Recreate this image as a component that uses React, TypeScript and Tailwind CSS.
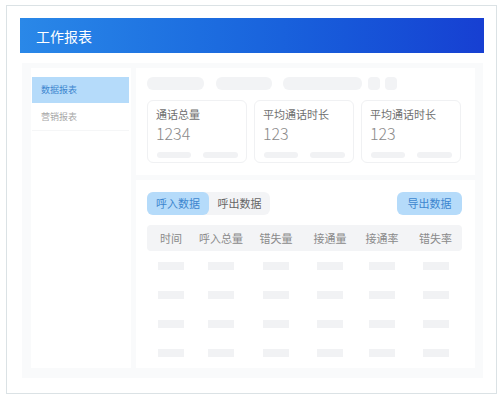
import React from "react";

const cols = ["时间", "呼入总量", "错失量", "接通量", "接通率", "错失率"];
const colClasses = ["w-[48px]", "w-[52px]", "w-[58px]", "w-[50px]", "w-[54px]", "w-[53px]"];

function StatCard({ title, value }: { title: string; value: string }) {
  return (
    <div className="w-[100px] h-[63px] rounded-md border border-[#f0f1f3] bg-white pl-[8px] pt-[5px] flex flex-col">
      <div className="text-[11px] leading-[16px] text-[#707070]">{title}</div>
      <div className="text-[16px] leading-[20px] font-light text-[#8a8a8a] mt-[1px]">{value}</div>
      <div className="flex gap-[12px] mt-[9px] pl-[1px]">
        <div className="w-[34px] h-[6px] rounded-full bg-[#f1f2f4]" />
        <div className="w-[35px] h-[6px] rounded-full bg-[#f1f2f4]" />
      </div>
    </div>
  );
}

export default function App() {
  return (
    <div
      className="w-[500px] h-[407px] bg-white pt-[5px] pl-[6px]"
      style={{ fontFamily: '"Noto Sans CJK SC", "Noto Sans", sans-serif' }}
    >
      <div className="w-[491px] h-[389px] border border-[#dbe2e5] bg-white pt-[12px] pl-[13px]">
        <div className="w-[464px] h-[35px] bg-gradient-to-r from-[#2a88e8] to-[#173fd2] flex items-center pl-[16px]">
          <span className="text-white text-[14px] leading-none">工作报表</span>
        </div>
        <div className="mt-[10px] ml-[2px] w-[461px] h-[315px] bg-[#f9fafb] flex gap-[5px] pl-[9px] pt-[5px]">
          <div className="w-[100px] h-[300px] bg-white pt-[9px] pl-[1px]">
            <div className="w-[97px] h-[26px] bg-[#b5dbfa] flex items-center pl-[9px] text-[9px] text-[#3d86cf]">
              数据报表
            </div>
            <div className="w-[97px] h-[28px] flex items-center pl-[9px] text-[9px] text-[#a8a8a8] border-b border-[#f5f6f7]">
              营销报表
            </div>
          </div>
          <div className="flex flex-col gap-[5px]">
            <div className="w-[339px] h-[107px] bg-white pt-[9px] pl-[11px]">
              <div className="flex items-center">
                <div className="w-[57px] h-[13px] rounded-md bg-[#f2f3f5]" />
                <div className="w-[56px] h-[13px] rounded-md bg-[#f2f3f5] ml-[12px]" />
                <div className="w-[79px] h-[13px] rounded-md bg-[#f2f3f5] ml-[11px]" />
                <div className="w-[12px] h-[13px] rounded-[4px] bg-[#f2f3f5] ml-[6px]" />
                <div className="w-[12px] h-[13px] rounded-[4px] bg-[#f2f3f5] ml-[5px]" />
              </div>
              <div className="flex gap-[7px] mt-[10px]">
                <StatCard title="通话总量" value="1234" />
                <StatCard title="平均通话时长" value="123" />
                <StatCard title="平均通话时长" value="123" />
              </div>
            </div>
            <div className="w-[339px] h-[188px] bg-white pt-[12px] pl-[11px]">
              <div className="w-[315px] flex items-center justify-between">
                <div className="flex rounded-md bg-[#f3f4f6]">
                  <div className="w-[62px] h-[23px] rounded-md bg-[#b5dbfa] text-[#3d86cf] text-[11px] flex items-center justify-center">
                    呼入数据
                  </div>
                  <div className="w-[61px] h-[23px] text-[#666] text-[11px] flex items-center justify-center">
                    呼出数据
                  </div>
                </div>
                <div className="w-[65px] h-[23px] rounded-md bg-[#b5dbfa] text-[#3d86cf] text-[11px] flex items-center justify-center">
                  导出数据
                </div>
              </div>
              <div className="w-[315px] mt-[10px]">
                <div className="h-[26px] bg-[#f3f4f6] rounded-sm flex items-center">
                  {cols.map((c, i) => (
                    <div key={c} className={`${colClasses[i]} text-center text-[11px] text-[#8a8a8a]`}>
                      {c}
                    </div>
                  ))}
                </div>
                {[0, 1, 2, 3].map((r) => (
                  <div key={r} className="h-[29px] flex items-center">
                    {colClasses.map((w, i) => (
                      <div key={i} className={`${w} flex justify-center`}>
                        <div className="w-[26px] h-[8px] bg-[#f1f2f4]" />
                      </div>
                    ))}
                  </div>
                ))}
              </div>
            </div>
          </div>
        </div>
      </div>
    </div>
  );
}
